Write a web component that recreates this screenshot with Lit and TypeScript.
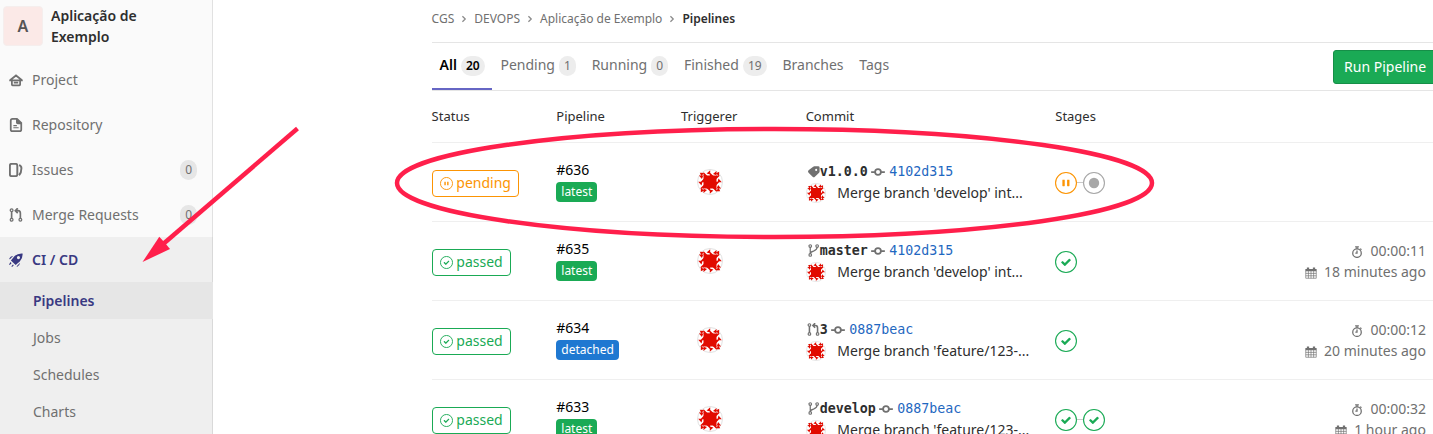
import { LitElement, html, css, svg, nothing } from 'lit';
import { customElement, property } from 'lit/decorators.js';

const check = svg`<path d="M6.278 7.697L5.045 6.464a.296.296 0 0 0-.42-.002l-.613.614a.298.298 0 0 0 .002.42l1.91 1.909a.5.5 0 0 0 .703.005l.265-.265L9.997 6.04a.291.291 0 0 0-.009-.408l-.614-.614a.29.29 0 0 0-.408-.009L6.278 7.697z"/>`;
const pause = svg`<path d="M4.7 5.3c0-.2.1-.3.3-.3h.9c.2 0 .3.1.3.3v3.4c0 .2-.1.3-.3.3H5c-.2 0-.3-.1-.3-.3V5.3m3 0c0-.2.1-.3.3-.3h.9c.2 0 .3.1.3.3v3.4c0 .2-.1.3-.3.3H8c-.2 0-.3-.1-.3-.3V5.3"/>`;
const dot = svg`<circle cx="7" cy="7" r="3.3"/>`;
const glyphs: Record<string, unknown> = { passed: check, pending: pause, created: dot };

const line = (d: unknown, w = 2) =>
  svg`<g fill="none" stroke="currentColor" stroke-width=${w}>${d}</g>`;

const icons: Record<string, unknown> = {
  home: line(svg`<path d="M1.500 8L8 2.800 14.500 8M3.300 8v5.200q0 .8.800.800h7.800q.8 0 .8-.8V8M.3 8.500h15.400M5.500 11h5"/>`),
  doc: svg`<path fill-rule="evenodd" d="M4 0h5.500L15 5.200V13a3 3 0 0 1-3 3H4a3 3 0 0 1-3-3V3a3 3 0 0 1 3-3zm0 2a1 1 0 0 0-1 1v10a1 1 0 0 0 1 1h8a1 1 0 0 0 1-1V7h-3a2 2 0 0 1-2-2V2z"/><path d="M5 8h4v1.300H5zM5 10.500h6v1.300H5z"/>`,
  issues: line(svg`<rect x="1" y="1" width="8.500" height="14" rx="2"/><path d="M11.500 2.500q2.700.8 2.700 3.500 0 5-2.700 8"/>`, 2.2),
  merge: line(svg`<circle cx="3" cy="2.500" r="1.600"/><circle cx="3" cy="13.500" r="1.600"/><circle cx="13" cy="13.500" r="1.600"/><path d="M3 4.200v7.600M13 11.800V6q0-3-2.500-3H8M10 .2L7.200 3 10 5.800" stroke-width="1.900"/>`, 1.4),
  branch: line(svg`<circle cx="4" cy="2.500" r="1.600"/><circle cx="4" cy="13.500" r="1.600"/><circle cx="12.500" cy="2.500" r="1.600"/><path d="M4 4.100v7.800M12.500 4.100q0 3-4.500 4.700-4 1.200-4 3" stroke-width="1.500"/>`, 1.4),
  rocket: svg`<path fill-rule="evenodd" d="M15.500.5q.4 5.800-3.200 9.300L7.600 13.800 2.200 8.500 6.200 3.700Q9.700.1 15.500.5zM10.800 3.400a1.800 1.800 0 1 0 0 3.600 1.800 1.800 0 0 0 0-3.600z"/><path d="M4.800 3.400L1 7.200l-.8-.3Q1.500 3.500 4.800 3.400zM12.600 11.200l-3.800 3.900.3.800q3.300-1.300 3.500-4.700zM1.600 10.300l1.300 1.300-2 2.200-.8-.8zM4.500 13l1 1-2 2-.8-.8z"/>`,
  tag: svg`<path fill-rule="evenodd" d="M9 1.500h4.800q1.700 0 1.700 1.700V8q0 .8-.6 1.400l-5.200 5q-1.400 1.300-2.800 0l-5-4.900q-1.400-1.400 0-2.900l5.700-4.600q.6-.5 1.400-.5zm2.300 3.200a1.300 1.300 0 1 0 0 2.600 1.300 1.300 0 0 0 0-2.600z"/>`,
  commit: line(svg`<circle cx="8" cy="8" r="3.300"/><path d="M.8 8h3.900M11.300 8h3.900" stroke-linecap="round"/>`),
  timer: svg`<g fill="none" stroke="currentColor" stroke-width="1.700"><circle cx="8" cy="9.500" r="5.700"/><path d="M8 6v3.500H5.800M8 1v3M5.500 1.300h5M12.300 3.500l1.600 1.600"/></g>`,
  calendar: svg`<g fill="none" stroke="currentColor"><path d="M1 5v10h14V5M1 8.500h14M1 11.700h14M4.500 5v10M8 5v10M11.500 5v10" stroke-width=".9"/></g><path d="M.5 2.500h2V.8h3v1.700h5V.8h3v1.700h2v3.300H.5z"/>`,
  chevron: line(svg`<path d="M5.500 3.500L10 8l-4.500 4.500"/>`),
};

@customElement('ui-icon')
export class UiIcon extends LitElement {
  @property() name = '';
  @property({ type: Number }) size = 14;
  static styles = css`
    :host { display: inline-flex; flex: none; }
    svg { display: block; fill: currentColor; }
  `;
  render() {
    return html`<svg width=${this.size} height=${this.size} viewBox="0 0 16 16">${icons[this.name]}</svg>`;
  }
}

@customElement('status-icon')
export class StatusIcon extends LitElement {
  @property() status = 'passed';
  @property({ type: Number }) size = 14;
  static styles = css`
    :host { display: inline-flex; flex: none; }
    svg { display: block; fill: currentColor; }
  `;
  render() {
    const w = this.size > 14 ? 0.7 : 1;
    return html`<svg width=${this.size} height=${this.size} viewBox="0 0 14 14">
      <circle cx="7" cy="7" r=${7 - w / 2} fill="none" stroke="currentColor" stroke-width=${w}></circle>
      ${glyphs[this.status]}
    </svg>`;
  }
}

@customElement('ident-icon')
export class IdentIcon extends LitElement {
  @property({ type: Number }) size = 26;
  static styles = css`
    :host { display: inline-flex; flex: none; }
    svg { display: block; }
  `;
  render() {
    return html`<svg width=${this.size} height=${this.size} viewBox="0 0 26 26">
      <circle cx="13" cy="13" r="12.500" fill="#fff" stroke="#e1e1e1"></circle>
      <g fill="#e10b00">
        <path d="M6.500 6.500h13v13h-13z"></path>
        ${[0, 90, 180, 270].map(
          (a) => svg`<path transform="rotate(${a} 13 13)" d="M6.500 7V3L10.300 7zM9.600 4.500l3.600-3.300v4.300zM12.800 7V3.400L16.500 7zM16 4.900l3.500-3v4.400zM2.800 3.800l4 .2-2.300 3.300z"/>`,
        )}
      </g>
    </svg>`;
  }
}

interface Row {
  id: number; status: string; label: string; kind: string; ref: string;
  sha: string; msg: string; stages: string[]; time?: string; ago?: string;
}

const rows: Row[] = [
  { id: 636, status: 'pending', label: 'latest', kind: 'tag', ref: 'v1.0.0', sha: '4102d315', msg: "Merge branch 'develop' int...", stages: ['pending', 'created'] },
  { id: 635, status: 'passed', label: 'latest', kind: 'branch', ref: 'master', sha: '4102d315', msg: "Merge branch 'develop' int...", stages: ['passed'], time: '00:00:11', ago: '18 minutes ago' },
  { id: 634, status: 'passed', label: 'detached', kind: 'merge', ref: '3', sha: '0887beac', msg: "Merge branch 'feature/123-...", stages: ['passed'], time: '00:00:12', ago: '20 minutes ago' },
  { id: 633, status: 'passed', label: 'latest', kind: 'branch', ref: 'develop', sha: '0887beac', msg: "Merge branch 'feature/123-...", stages: ['passed', 'passed'], time: '00:00:32', ago: '1 hour ago' },
];

const nav: [string, string, string?][] = [
  ['home', 'Project'], ['doc', 'Repository'], ['issues', 'Issues', '0'], ['merge', 'Merge Requests', '0'],
];
const tabs: [string, string?][] = [
  ['All', '20'], ['Pending', '1'], ['Running', '0'], ['Finished', '19'], ['Branches'], ['Tags'],
];

@customElement('app-root')
export class AppRoot extends LitElement {
  static styles = css`
    * { box-sizing: border-box; }
    :host {
      display: flex; position: relative; height: 434px; overflow: hidden; background: #fff;
      font: 14px/20px "Noto Sans", sans-serif; color: #2e2e2e; white-space: nowrap;
    }
    .side { width: 213px; flex: none; background: #fafafa; border-right: 1px solid #e1e1e1; }
    .project { display: flex; height: 57px; padding: 5px 0 0 3px; gap: 8px; font-weight: 600; line-height: 21px; }
    .avatar {
      width: 40px; height: 40px; margin-top: 1px; border: 1px solid #f5eeed; border-radius: 4px; background: #fbe9e7;
      color: #555; font-size: 16px; display: flex; align-items: center; justify-content: center;
    }
    .item { display: flex; align-items: center; height: 45px; padding: 0 15px 0 9px; gap: 9px; color: #707070; }
    .item .count { margin-left: auto; }
    .count { background: #e6e6e6; color: #707070; border-radius: 10px; font-size: 12px; line-height: 20px; height: 20px; padding: 0 5px; }
    .group { height: 200px; background: #efefef; margin-right: -1px; border-right: 1px solid #d9d9d9; }
    .group .item { color: #393982; font-weight: 600; }
    .sub { height: 37px; line-height: 37px; padding-left: 33px; color: #707070; }
    .sub.on { background: #e6e6e6; color: #393982; font-weight: 600; margin-right: -1px; }
    .main { flex: none; width: 1247px; margin-left: 218.6px; }
    .crumbs { display: flex; align-items: center; height: 43px; padding-bottom: 5px; border-bottom: 1px solid #e5e5e5; font-size: 12px; color: #707070; gap: 5px; }
    .crumbs b { font-weight: 600; color: #2e2e2e; }
    .crumbs ui-icon { color: #8a8a8a; }
    .tabs { display: flex; height: 48px; border-bottom: 1px solid #e5e5e5; }
    .tab { display: flex; height: 47px; padding: 0 7.800px 3px 8px; align-items: center; gap: 4px; color: #707070; }
    .tab .count { background: #ededed; margin-top: 1px; }
    .tab.on { border-bottom: 2px solid #6666c4; padding-bottom: 1px; color: #000; font-weight: 600; }
    .tab.on .count { color: #000; }
    .run { margin: 7px 0 0 436.100px; height: 34px; border: 1px solid #168f48; border-radius: 3px; background: #1aaa55; color: #fff; padding: 0 10px; line-height: 32px; }
    .row { display: grid; grid-template-columns: 124.700px 124.700px 124.700px 249.600px 377px; height: 79px; border-bottom: 1px solid #efefef; align-items: center; }
    .head { height: 52px; font-size: 13px; padding-bottom: 2px; }
    .badge { display: flex; width: max-content; align-items: center; gap: 3.700px; height: 27px; margin-top: 2px; border: 1px solid; border-radius: 4px; padding: 0 7px; }
    .badge.passed, .st.passed { color: #1aaa55; }
    .badge.pending, .st.pending { color: #fc9403; }
    .st.created { color: #a7a7a7; }
    .pipe { color: #000; padding-bottom: 2px; }
    .label { display: block; width: max-content; height: 20px; margin-top: 2px; padding: 0 5px; border-radius: 4px; background: #1aaa55; color: #fff; font-size: 12px; line-height: 19px; }
    .label.detached { background: #1f78d1; }
    .who { display: flex; padding-left: 16.400px; }
    .ref { display: flex; align-items: center; height: 21px; padding-left: 1px; font: 13.300px/21px "DejaVu Sans Mono", monospace; color: #707070; }
    .ref b { color: #2e2e2e; }
    .ref .c { margin: 0 4px 0 3.500px; }
    .ref .sha { color: #1f68c1; }
    .msg { display: flex; align-items: center; height: 21px; gap: 11.700px; }
    .stages { display: flex; align-items: center; margin-top: 2px; }
    .st { display: flex; }
    .st + .st::before { content: ""; width: 6px; height: 1px; background: #c8c8c8; margin-top: 10px; }
    .times { display: flex; flex-direction: column; align-items: flex-end; color: #707070; }
    .times div { display: flex; align-items: center; gap: 7px; height: 21px; }
    .times ui-icon { margin-top: 2px; }
    .last { display: flex; justify-content: space-between; padding-right: 6.300px; }
    .marks { position: absolute; left: 0; top: 0; pointer-events: none; }
  `;

  render() {
    return html`
      <aside class="side">
        <div class="project"><span class="avatar">A</span><span>Aplicação de<br />Exemplo</span></div>
        ${nav.map(([i, t, n]) => html`<div class="item"><ui-icon name=${i}></ui-icon>${t}${n ? html`<span class="count">${n}</span>` : nothing}</div>`)}
        <div class="group">
          <div class="item"><ui-icon name="rocket"></ui-icon>CI / CD</div>
          ${['Pipelines', 'Jobs', 'Schedules', 'Charts'].map((t, i) => html`<div class="sub ${i ? '' : 'on'}">${t}</div>`)}
        </div>
      </aside>
      <main class="main">
        <nav class="crumbs">
          ${['CGS', 'DEVOPS', 'Aplicação de Exemplo'].map((t) => html`<span>${t}</span><ui-icon name="chevron" size="10"></ui-icon>`)}<b>Pipelines</b>
        </nav>
        <div class="tabs">
          ${tabs.map(([t, n], i) => html`<div class="tab ${i ? '' : 'on'}">${t}${n ? html`<span class="count">${n}</span>` : nothing}</div>`)}
          <div class="run">Run Pipeline</div>
        </div>
        <div class="row head"><span>Status</span><span>Pipeline</span><span>Triggerer</span><span>Commit</span><span>Stages</span></div>
        ${rows.map((r) => html`
          <div class="row">
            <div><span class="badge ${r.status}"><status-icon status=${r.status} size="13"></status-icon>${r.status}</span></div>
            <div class="pipe">#${r.id}<span class="label ${r.label}">${r.label}</span></div>
            <div class="who"><ident-icon size="26"></ident-icon></div>
            <div>
              <div class="ref"><ui-icon name=${r.kind} size="13"></ui-icon><b>${r.ref}</b><ui-icon class="c" name="commit"></ui-icon><span class="sha">${r.sha}</span></div>
              <div class="msg"><ident-icon size="20"></ident-icon>${r.msg}</div>
            </div>
            <div class="last">
              <div class="stages">${r.stages.map((s) => html`<span class="st ${s}"><status-icon status=${s} size="22"></status-icon></span>`)}</div>
              ${r.time ? html`<div class="times"><div><ui-icon name="timer" size="12"></ui-icon>${r.time}</div><div><ui-icon name="calendar" size="12"></ui-icon>${r.ago}</div></div>` : nothing}
            </div>
          </div>`)}
      </main>
      <svg class="marks" width="1433" height="434">
        <g fill="none" stroke="#ff1f4b" stroke-width="4.500">
          <ellipse cx="774.500" cy="183" rx="377.500" ry="54"></ellipse>
          <path d="M297.500 128.500L162 245"></path>
        </g>
        <path d="M142.500 262L159.300 236.800 165 243 170 249z" fill="#ff1f4b"></path>
      </svg>
    `;
  }
}
